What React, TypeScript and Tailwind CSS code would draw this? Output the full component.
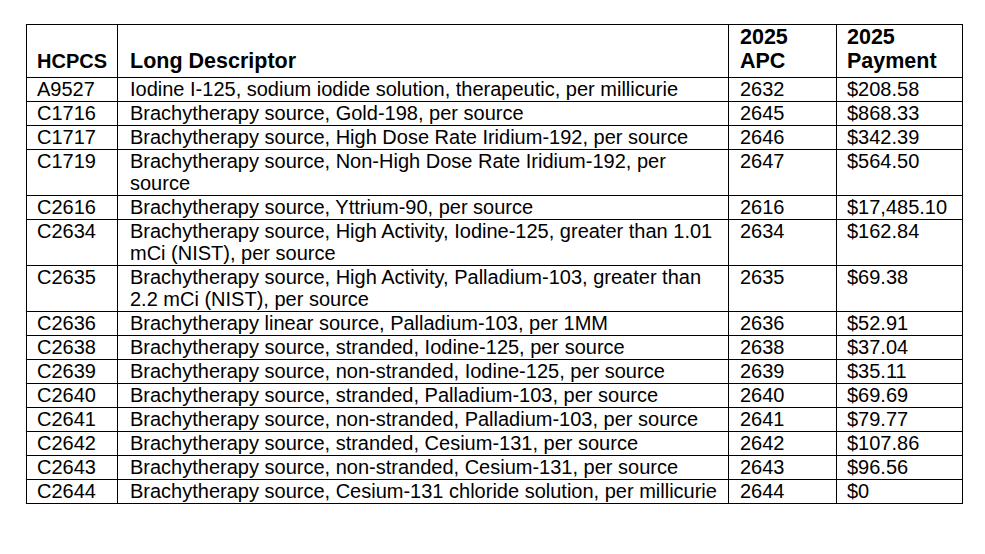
const rows: { code: string; desc: string[]; apc: string; pay: string }[] = [
  { code: "A9527", desc: ["Iodine I-125, sodium iodide solution, therapeutic, per millicurie"], apc: "2632", pay: "$208.58" },
  { code: "C1716", desc: ["Brachytherapy source, Gold-198, per source"], apc: "2645", pay: "$868.33" },
  { code: "C1717", desc: ["Brachytherapy source, High Dose Rate Iridium-192, per source"], apc: "2646", pay: "$342.39" },
  { code: "C1719", desc: ["Brachytherapy source, Non-High Dose Rate Iridium-192, per", "source"], apc: "2647", pay: "$564.50" },
  { code: "C2616", desc: ["Brachytherapy source, Yttrium-90, per source"], apc: "2616", pay: "$17,485.10" },
  { code: "C2634", desc: ["Brachytherapy source, High Activity, Iodine-125, greater than 1.01", "mCi (NIST), per source"], apc: "2634", pay: "$162.84" },
  { code: "C2635", desc: ["Brachytherapy source, High Activity, Palladium-103, greater than", "2.2 mCi (NIST), per source"], apc: "2635", pay: "$69.38" },
  { code: "C2636", desc: ["Brachytherapy linear source, Palladium-103, per 1MM"], apc: "2636", pay: "$52.91" },
  { code: "C2638", desc: ["Brachytherapy source, stranded, Iodine-125, per source"], apc: "2638", pay: "$37.04" },
  { code: "C2639", desc: ["Brachytherapy source, non-stranded, Iodine-125, per source"], apc: "2639", pay: "$35.11" },
  { code: "C2640", desc: ["Brachytherapy source, stranded, Palladium-103, per source"], apc: "2640", pay: "$69.69" },
  { code: "C2641", desc: ["Brachytherapy source, non-stranded, Palladium-103, per source"], apc: "2641", pay: "$79.77" },
  { code: "C2642", desc: ["Brachytherapy source, stranded, Cesium-131, per source"], apc: "2642", pay: "$107.86" },
  { code: "C2643", desc: ["Brachytherapy source, non-stranded, Cesium-131, per source"], apc: "2643", pay: "$96.56" },
  { code: "C2644", desc: ["Brachytherapy source, Cesium-131 chloride solution, per millicurie"], apc: "2644", pay: "$0" },
];

export default function App() {
  return (
    <div className="min-h-[554px] w-[985px] bg-white pl-[26px] pt-[24px] font-['Liberation_Sans',Arial,sans-serif] text-black">
      <table className="w-[936px] table-fixed border-collapse border border-black">
        <colgroup>
          <col className="w-[91px]" />
          <col className="w-[611px]" />
          <col className="w-[108px]" />
          <col className="w-[126px]" />
        </colgroup>
        <thead>
          <tr className="text-[21.5px] font-bold leading-[24px]">
            <th className="border border-black pb-[4px] pl-[10px] text-left align-bottom text-[20px]">HCPCS</th>
            <th className="border border-black pb-[4px] pl-[12px] text-left align-bottom">Long Descriptor</th>
            <th className="border border-black pb-[4px] pl-[11px] text-left align-bottom">
              2025
              <br />
              APC
            </th>
            <th className="border border-black pb-[4px] pl-[10px] text-left align-bottom">
              2025
              <br />
              Payment
            </th>
          </tr>
        </thead>
        <tbody>
          {rows.map((r) => (
            <tr key={r.code} className="text-[20px] leading-[22px]">
              <td className="border border-black pb-[1px] pl-[10px] align-top whitespace-nowrap">{r.code}</td>
              <td className="border border-black pb-[1px] pl-[12px] align-top whitespace-nowrap">
                {r.desc.map((line, i) => (
                  <div key={i}>{line}</div>
                ))}
              </td>
              <td className="border border-black pb-[1px] pl-[11px] align-top">{r.apc}</td>
              <td className="border border-black pb-[1px] pl-[10px] align-top whitespace-nowrap">{r.pay}</td>
            </tr>
          ))}
        </tbody>
      </table>
    </div>
  );
}
